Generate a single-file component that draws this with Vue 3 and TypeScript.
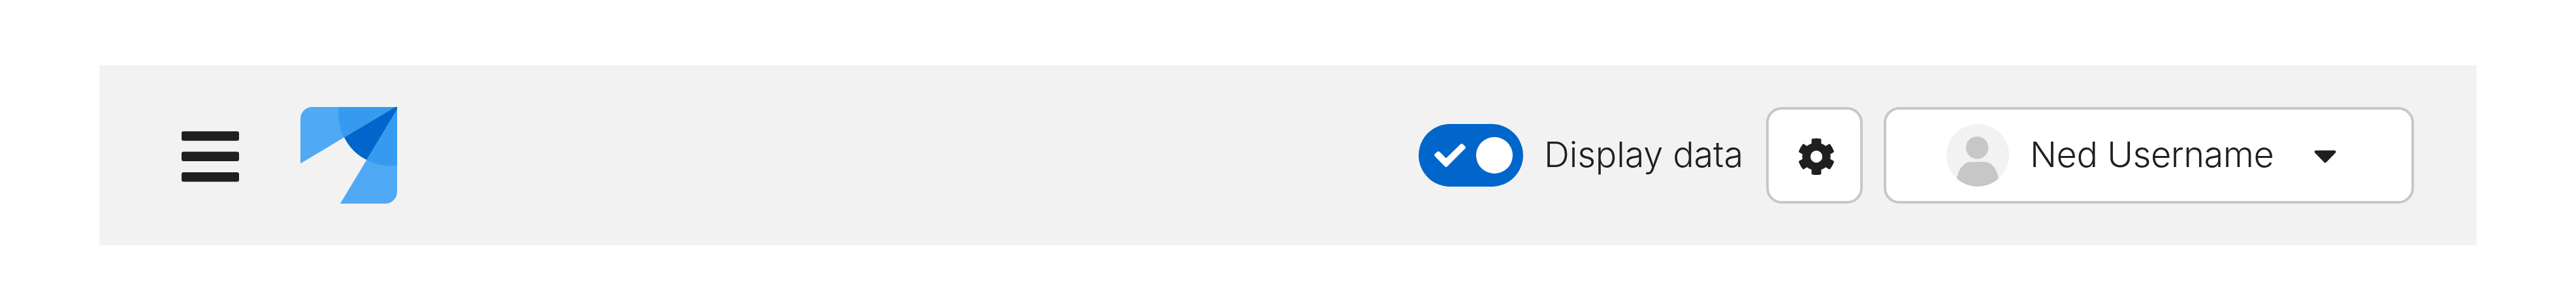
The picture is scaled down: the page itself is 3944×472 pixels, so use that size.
<script setup lang="ts">
import { ref } from 'vue'

const displayData = ref<boolean>(true)
const userName: string = 'Ned Username'
</script>

<template>
  <div class="page">
    <header class="masthead">
      <button class="menu" aria-label="Global navigation">
        <svg width="88" height="78" viewBox="0 0 88 78" fill="#1f1f1f">
          <rect x="0" y="0.3" width="88" height="14.5" rx="3" />
          <rect x="0" y="31.6" width="88" height="14.5" rx="3" />
          <rect x="0" y="63.1" width="88" height="14.5" rx="3" />
        </svg>
      </button>
      <a class="brand" aria-label="Home">
        <svg width="148" height="148" viewBox="0 0 148 148">
          <path fill="#4fa9f4" d="M18 0H145L0 86.5V18A18 18 0 0 1 18 0Z" />
          <path fill="#4fa9f4" d="M148 3.5V130A18 18 0 0 1 130 148H61Z" />
          <path fill="#369bf0" d="M58 0V14A76 76 0 0 0 67 46.5L145 0Z" />
          <path fill="#369bf0" d="M148 3.5L101.3 81A76 76 0 0 0 134 90H148Z" />
          <path fill="#0066cc" d="M145 0L67 46.5A76 76 0 0 0 101.3 81L148 3.5V0Z" />
        </svg>
      </a>
      <div class="tools">
        <label class="switch">
          <input v-model="displayData" class="native" type="checkbox" />
          <span class="track" :class="{ on: displayData }">
            <svg width="48" height="36" viewBox="0 0 48 36">
              <path
                fill="#fff"
                d="M1 15.8L4.5 12.6Q6.3 11.2 8 12.6L18 22.6L40.3 0.7Q42 -0.4 43.5 0.8L47.3 4.6Q48.5 6 47.3 7.5L19.7 35.3Q18 36.7 16.3 35.3L0.8 19.4Q-0.8 17.6 1 15.8Z"
              />
            </svg>
            <span class="knob"></span>
          </span>
          <span class="text label">Display data</span>
        </label>
        <button class="control settings" aria-label="Settings">
          <svg width="56" height="56" viewBox="0 0 56 56">
            <path
              fill="#1f1f1f"
              fill-rule="evenodd"
              d="M22 .6Q28 -.4 34 .6Q35.4 .8 35.4 2V7.9Q39.2 9.2 42.4 11.7L47.2 8.8Q48.3 8.2 49.1 9.2Q53 14 54.9 19.7Q55.2 20.9 54.2 21.4L49.3 24.2Q50 28 49.3 31.8L54.2 34.6Q55.2 35.1 54.9 36.3Q53 42 49.1 46.8Q48.3 47.8 47.2 47.2L42.4 44.3Q39.2 46.8 35.4 48.1V54Q35.4 55.2 34 55.4Q28 56.4 22 55.4Q20.6 55.2 20.6 54V48.1Q16.8 46.8 13.6 44.3L8.8 47.2Q7.7 47.8 6.9 46.8Q3 42 1.1 36.3Q.8 35.1 1.8 34.6L6.7 31.8Q6 28 6.7 24.2L1.8 21.4Q.8 20.9 1.1 19.7Q3 14 6.9 9.2Q7.7 8.2 8.8 8.8L13.6 11.7Q16.8 9.2 20.6 7.9V2Q20.6 .8 22 .6ZM28 18.8A9.2 9.2 0 1 0 28 37.2A9.2 9.2 0 1 0 28 18.8Z"
            />
          </svg>
        </button>
        <button class="control user">
          <svg class="avatar" width="96" height="96" viewBox="0 0 96 96">
            <circle cx="48" cy="48" r="48" fill="#f2f2f2" />
            <circle cx="47.1" cy="36.4" r="17.2" fill="#c7c7c7" />
            <path
              fill="#c7c7c7"
              d="M16 83.8C19 67 27 59.5 36 58.3Q48 57.6 60 58.3C69 59.5 77 67 79.8 83.8A48 48 0 0 1 16 83.8Z"
            />
          </svg>
          <span class="text name">{{ userName }}</span>
          <svg class="caret" width="34" height="20" viewBox="0 0 34 20">
            <path fill="#1f1f1f" d="M3 .5H31Q33.2 .7 33.4 2.6Q33.4 3.6 32.5 4.6L18.3 19Q17 20 15.7 19L1.5 4.6Q.6 3.6 .6 2.6Q.8 .7 3 .5Z" />
          </svg>
        </button>
      </div>
    </header>
  </div>
</template>

<style>
body {
  margin: 0;
  background: #fff;
}
</style>

<style scoped>
.page {
  box-sizing: border-box;
  width: 3944px;
  height: 472px;
  padding: 100px 152px 96px;
  background: #fff;
}
.masthead {
  box-sizing: border-box;
  display: flex;
  align-items: center;
  height: 276px;
  padding: 0 96px 0 126px;
  background: #f2f2f2;
}
button {
  margin: 0;
  padding: 0;
  border: 0;
  background: none;
}
svg {
  display: block;
  flex: none;
}
.menu {
  padding-top: 4px;
  margin-right: 94px;
}
.tools {
  display: flex;
  align-items: center;
  margin-left: auto;
}
.switch {
  display: flex;
  align-items: center;
}
.native {
  display: none;
}
.track {
  box-sizing: border-box;
  display: flex;
  align-items: center;
  justify-content: space-between;
  width: 160px;
  height: 96px;
  padding: 0 16px 0 24px;
  border-radius: 48px;
  background: #c7c7c7;
}
.track.on {
  background: #0066cc;
}
.knob {
  width: 56px;
  height: 56px;
  border-radius: 50%;
  background: #fff;
}
.text {
  padding-bottom: 2px;
  color: #1f1f1f;
  font-family: Inter, Lato, sans-serif;
  font-size: 54px;
  font-weight: 300;
  line-height: 84px;
  text-align: left;
  white-space: nowrap;
}
.label {
  width: 340px;
  margin-left: 32px;
  letter-spacing: -0.15px;
}
.control {
  box-sizing: border-box;
  display: flex;
  align-items: center;
  height: 148px;
  border: 4px solid #c7c7c7;
  border-radius: 24px;
  background: #fff;
}
.settings {
  justify-content: center;
  width: 148px;
  padding-top: 4px;
  padding-left: 6px;
}
.user {
  width: 812px;
  margin-left: 32px;
  padding-left: 92px;
}
.name {
  width: 404px;
  margin-left: 32px;
  letter-spacing: -0.45px;
}
.caret {
  margin-top: 4px;
  margin-left: 31px;
}
</style>
